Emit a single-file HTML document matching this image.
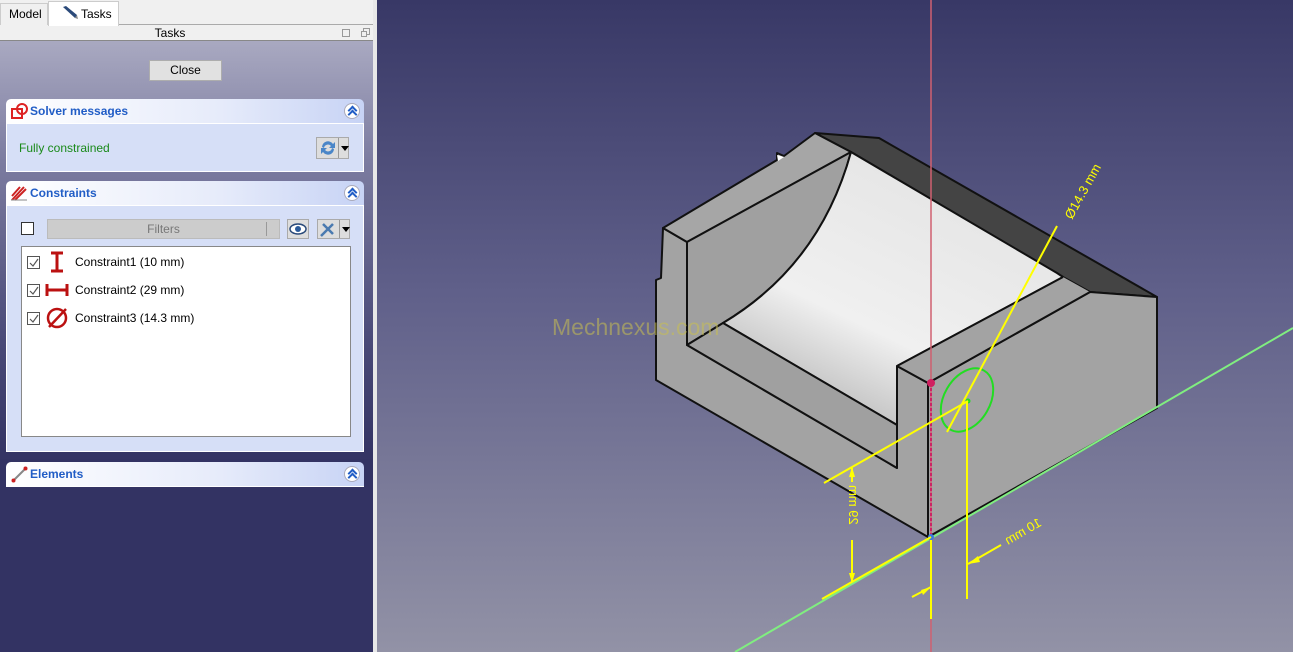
<!DOCTYPE html>
<html><head><meta charset="utf-8">
<style>
*{margin:0;padding:0;box-sizing:border-box}
body{width:1293px;height:652px;overflow:hidden;position:relative;font-family:"Liberation Sans",sans-serif;font-size:12px;background:#f0f0f0}
#left{position:absolute;left:0;top:0;width:377px;height:652px;background:#f0f0f0}
.tabbar{position:absolute;left:0;top:0;width:373px;height:25px;border-bottom:1px solid #aaa}
.tab{position:absolute;top:3px;height:22px;font-size:12px;line-height:20px;color:#000}
#panel{position:absolute;left:0;top:40px;width:373px;height:612px;background:linear-gradient(#a9a9c1 0px,#7c7ca0 120px,#4a4a78 300px,#333363 420px,#333363 612px);border-top:1px solid #888}
.box{position:absolute;left:6px;width:358px;border-radius:5px 5px 0 0;overflow:hidden}
.hdr{height:25px;background:linear-gradient(90deg,#fff,#e6ebfa 60%,#c7d3f5);color:#215dc6;font-weight:bold;font-size:12px;line-height:25px;padding-left:24px;position:relative;border-bottom:1px solid #fff}
.body{background:#d6dff7;border:1px solid #fff;border-top:none}
.chev{position:absolute;right:4px;top:4px;width:16px;height:16px;border-radius:50%;background:#fff;border:1px solid #aab;}
.chev:after{content:"";position:absolute;left:4px;top:3px;width:5px;height:5px;border-left:2px solid #215dc6;border-top:2px solid #215dc6;transform:rotate(45deg)}
.chev:before{content:"";position:absolute;left:4px;top:7px;width:5px;height:5px;border-left:2px solid #215dc6;border-top:2px solid #215dc6;transform:rotate(45deg)}
.cb{position:absolute;width:13px;height:13px;border:1px solid #333;background:#fff}
.row{position:absolute;left:24px;height:20px;line-height:20px;font-size:12px}
#view{position:absolute;left:377px;top:0;width:916px;height:652px;background:linear-gradient(#383866,#60608a 45%,#9292a6)}
</style></head><body>
<div id="left">
 <div class="tabbar">
  <div class="tab" style="left:0;width:48px;border:1px solid #ccc;border-bottom:none;background:#f0f0f0;padding-left:8px">Model</div>
  <div class="tab" style="left:48px;top:1px;height:25px;width:71px;background:#fff;border:1px solid #ccc;border-bottom:none;padding-left:32px;line-height:24px">Tasks
   <svg style="position:absolute;left:12px;top:3px" width="18" height="16" viewBox="0 0 18 16"><path d="M2 2 L5 1 L16 10 L14 13 Z" fill="#2b4a7a"/><path d="M14 13 L16 10 L17 14 Z" fill="#888"/></svg></div>
 </div>
 <div style="position:absolute;left:0;top:26px;width:340px;height:14px;text-align:center;font-size:12px;line-height:14px">Tasks</div>
 <div style="position:absolute;left:342px;top:29px;width:8px;height:8px;border:1px solid #999"></div>
 <div style="position:absolute;left:363px;top:28px;width:7px;height:7px;border:1px solid #999"></div>
 <div style="position:absolute;left:361px;top:31px;width:6px;height:6px;border:1px solid #999;background:#f0f0f0"></div>
 <div id="panel">
  <div style="position:absolute;left:149px;top:19px;width:73px;height:21px;background:#e1e1e1;border:1px solid #adadad;text-align:center;line-height:19px">Close</div>
  <div class="box" style="top:58px">
   <div class="hdr">Solver messages<div class="chev"></div>
    <svg style="position:absolute;left:5px;top:4px" width="18" height="17" viewBox="0 0 18 17"><rect x="1" y="6" width="10" height="9" fill="none" stroke="#d22" stroke-width="2"/><circle cx="11" cy="6" r="5" fill="none" stroke="#d22" stroke-width="2"/></svg></div>
   <div class="body" style="height:48px;position:relative">
    <div style="position:absolute;left:12px;top:17px;color:#1a8a1a">Fully constrained</div>
    <div style="position:absolute;left:309px;top:13px;width:33px;height:22px;background:#ddd;border:1px solid #aaa"><svg width="20" height="20" style="position:absolute;left:1px;top:0"><path d="M4 9 A6 6 0 0 1 15 6 L17 4 L17 10 L11 10 L13 8 A4 4 0 0 0 6 10Z M16 11 A6 6 0 0 1 5 14 L3 16 L3 10 L9 10 L7 12 A4 4 0 0 0 14 10Z" fill="#4a86c8"/></svg><div style="position:absolute;left:21px;top:0;height:20px;border-left:1px solid #999"></div><div style="position:absolute;left:24px;top:8px;border:4px solid transparent;border-top:5px solid #000"></div></div>
   </div>
  </div>
  <div class="box" style="top:140px">
   <div class="hdr">Constraints<div class="chev"></div>
    <svg style="position:absolute;left:4px;top:3px" width="18" height="18" viewBox="0 0 18 18"><path d="M2 16 L14 3 M5 16 L16 5 M2 12 L10 3" stroke="#c22" stroke-width="2"/><path d="M1 16 L17 16" stroke="#888" stroke-width="1"/></svg></div>
   <div class="body" style="height:246px;position:relative">
    <div class="cb" style="left:14px;top:16px"></div>
    <div style="position:absolute;left:40px;top:13px;width:233px;height:20px;background:#ccc;border:1px solid #bbb;color:#777;text-align:center;line-height:18px">Filters<div style="position:absolute;right:3px;top:2px;height:14px;border-left:1px solid #999;width:10px"></div></div>
    <div style="position:absolute;left:280px;top:13px;width:22px;height:20px;background:#ddd;border:1px solid #aaa"><svg width="20" height="18"><ellipse cx="10" cy="9" rx="8" ry="5" fill="#fff" stroke="#2a4a7a" stroke-width="1.5"/><circle cx="10" cy="9" r="3" fill="#2a5a9a"/></svg></div>
    <div style="position:absolute;left:310px;top:13px;width:33px;height:20px;background:#ddd;border:1px solid #aaa"><svg width="20" height="18"><path d="M3 16 L15 4 M5 4 L15 14" stroke="#4a7ab0" stroke-width="2.5"/></svg><div style="position:absolute;left:21px;top:0;height:18px;border-left:1px solid #999"></div><div style="position:absolute;left:24px;top:7px;border:4px solid transparent;border-top:5px solid #000"></div></div>
    <div style="position:absolute;left:14px;top:40px;width:330px;height:191px;background:#fff;border:1px solid #888">
     <div class="cb" style="left:5px;top:9px;border-color:#555"><svg width="11" height="11" style="position:absolute"><path d="M2 6 L5 9 L10 2" stroke="#555" fill="none" stroke-width="1.2"/></svg></div>
     <svg style="position:absolute;left:24px;top:4px" width="22" height="22"><path d="M5 2h12M5 20h12M11 3v16" stroke="#b11" stroke-width="3"/></svg>
     <div class="row" style="left:53px;top:5px">Constraint1 (10 mm)</div>
     <div class="cb" style="left:5px;top:37px;border-color:#555"><svg width="11" height="11" style="position:absolute"><path d="M2 6 L5 9 L10 2" stroke="#555" fill="none" stroke-width="1.2"/></svg></div>
     <svg style="position:absolute;left:23px;top:32px" width="24" height="22"><path d="M2 5v12M22 5v12M3 11h18" stroke="#b11" stroke-width="3"/></svg>
     <div class="row" style="left:53px;top:33px">Constraint2 (29 mm)</div>
     <div class="cb" style="left:5px;top:65px;border-color:#555"><svg width="11" height="11" style="position:absolute"><path d="M2 6 L5 9 L10 2" stroke="#555" fill="none" stroke-width="1.2"/></svg></div>
     <svg style="position:absolute;left:24px;top:60px" width="22" height="22"><circle cx="11" cy="11" r="9" fill="none" stroke="#b11" stroke-width="2.5"/><path d="M3 20 L20 2" stroke="#b11" stroke-width="2.5"/></svg>
     <div class="row" style="left:53px;top:61px">Constraint3 (14.3 mm)</div>
    </div>
   </div>
  </div>
  <div class="box" style="top:421px">
   <div class="hdr">Elements<div class="chev"></div>
    <svg style="position:absolute;left:5px;top:4px" width="18" height="18"><path d="M2 15 L15 2" stroke="#888" stroke-width="2"/><circle cx="2.5" cy="14.5" r="2" fill="#c22"/><circle cx="14.5" cy="2.5" r="2" fill="#c22"/></svg></div>
  </div>
 </div>
</div>
<div id="view">
<svg width="916" height="652" viewBox="377 0 916 652" style="position:absolute;left:0;top:0">
 <defs>
  <linearGradient id="cyl" x1="0" y1="1" x2="0.6" y2="0"><stop offset="0" stop-color="#9e9e9e"/><stop offset="0.45" stop-color="#f0f0f0"/><stop offset="1" stop-color="#e4e4e4"/></linearGradient>
 </defs>
 <g stroke="#111" stroke-width="2" stroke-linejoin="round">
  <polygon points="815,133 879,138 1157,297 1090,292 1063,277 851,152" fill="#444"/>
  <polygon points="928,383 1090,292 1157,297 1157,408 928,537" fill="#a3a3a3"/>
  <polygon points="656,280 661,278 663,228 687,242 687,345 897,468 897,366 928,383 928,537 656,380" fill="#a3a3a3"/>
  <polygon points="663,228 777,160 777,153 784,156 815,133 851,152 687,242" fill="#a6a6a6"/>
  <path d="M687,242 L851,152 Q820,265 723,323 L687,345 Z" fill="#a0a0a0"/>
  <path d="M851,152 L1057,273 L1063,277 L897,366 L897,425 L723,323 Q820,265 851,152 Z" fill="url(#cyl)"/>
  <polygon points="687,345 723,323 897,425 897,468" fill="#a0a0a0"/>
  <path d="M1063,277 L897,366 L928,383 L1090,292" fill="#a3a3a3"/>
 </g>
 <polygon points="777,155 784,157 778,161" fill="#fff"/>
 <line x1="931" y1="0" x2="931" y2="652" stroke="#d06070" stroke-width="1.5"/>
 <line x1="931" y1="383" x2="931" y2="537" stroke="#cc2266" stroke-width="2" stroke-dasharray="3,2"/>
 <line x1="735" y1="652" x2="1293" y2="328" stroke="#80ee80" stroke-width="2"/>
 <circle cx="931" cy="383" r="4" fill="#d02060"/>
 <circle cx="931" cy="537" r="3" fill="#3a7ae0"/>
 <ellipse cx="967" cy="400" rx="23" ry="34" transform="rotate(30 967 400)" fill="none" stroke="#22dd22" stroke-width="2"/>
 <circle cx="968" cy="401" r="2.5" fill="#22dd22"/>
 <g stroke="#ffff00" stroke-width="2" fill="none">
  <line x1="1057" y1="226" x2="947" y2="432"/>
  <line x1="968" y1="401" x2="824" y2="483"/>
  <line x1="931" y1="537" x2="822" y2="599"/>
  <line x1="852" y1="468" x2="852" y2="482"/>
  <line x1="852" y1="540" x2="852" y2="582"/>
  <line x1="931" y1="540" x2="931" y2="619"/>
  <line x1="967" y1="401" x2="967" y2="599"/>
  <line x1="1001" y1="545" x2="968" y2="564"/>
  <line x1="912" y1="597" x2="931" y2="587"/>
 </g>
 <g fill="#ffff00">
  <polygon points="852,467 849,477 855,477"/>
  <polygon points="852,583 849,573 855,573"/>
  <polygon points="968,564 978,556 980,562"/>
  <polygon points="931,587 921,590 923,595"/>
 </g>
 <g fill="#ffff00" font-family="Liberation Sans,sans-serif" font-size="13">
  <text transform="translate(1072,220) rotate(-61)">Ø14.3 mm</text>
  <text transform="translate(849,485) rotate(90) scale(-1,1)" text-anchor="end">29 mm</text>
  <text transform="translate(1008,545) rotate(150) scale(1,-1)" text-anchor="end">10 mm</text>
 </g>
 <text x="552" y="335" font-family="Liberation Sans,sans-serif" font-size="23" fill="#c8c050" fill-opacity="0.55">Mechnexus.com</text>
</svg>
</div>
<div style="position:absolute;left:373px;top:0;width:4px;height:652px;background:#e8e8e8"></div>
</body></html>
